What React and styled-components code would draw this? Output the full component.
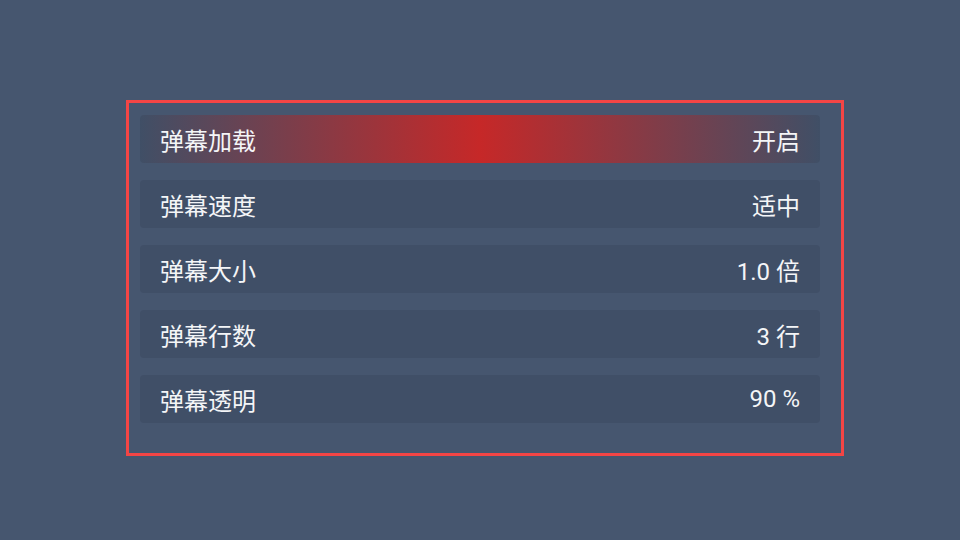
import React from "react";
import styled, { createGlobalStyle } from "styled-components";

const Global = createGlobalStyle`
  html, body {
    margin: 0;
    padding: 0;
    background: #46566f;
    width: 960px;
    height: 540px;
    overflow: hidden;
  }
`;

const Page = styled.div`
  width: 960px;
  height: 540px;
  box-sizing: border-box;
  padding: 100px 0 0 126px;
  font-family: Roboto, "Noto Sans CJK SC", sans-serif;
`;

const Frame = styled.div`
  width: 718px;
  box-sizing: border-box;
  border: 3px solid #f44545;
  padding: 12px 21px 30px 11px;
  display: flex;
  flex-direction: column;
  gap: 17px;
`;

const Row = styled.div`
  height: 48px;
  border-radius: 4px;
  display: flex;
  align-items: center;
  justify-content: space-between;
  padding: 0 20px;
  color: #f4f5f7;
  font-size: 24px;
  background: ${(p) =>
    p.$active
      ? "linear-gradient(to right, rgba(64,79,102,1) 0%, #c62828 50%, rgba(64,79,102,1) 100%)"
      : "#404f67"};
`;

const Label = styled.span``;

const Value = styled.span``;

const items = [
  ["弹幕加载", "开启"],
  ["弹幕速度", "适中"],
  ["弹幕大小", "1.0 倍"],
  ["弹幕行数", "3 行"],
  ["弹幕透明", "90 %"],
];

export default function App() {
  return (
    <Page>
      <Global />
      <Frame>
        {items.map(([l, v], i) => (
          <Row key={l} $active={i === 0}>
            <Label>{l}</Label>
            <Value>{v}</Value>
          </Row>
        ))}
      </Frame>
    </Page>
  );
}
